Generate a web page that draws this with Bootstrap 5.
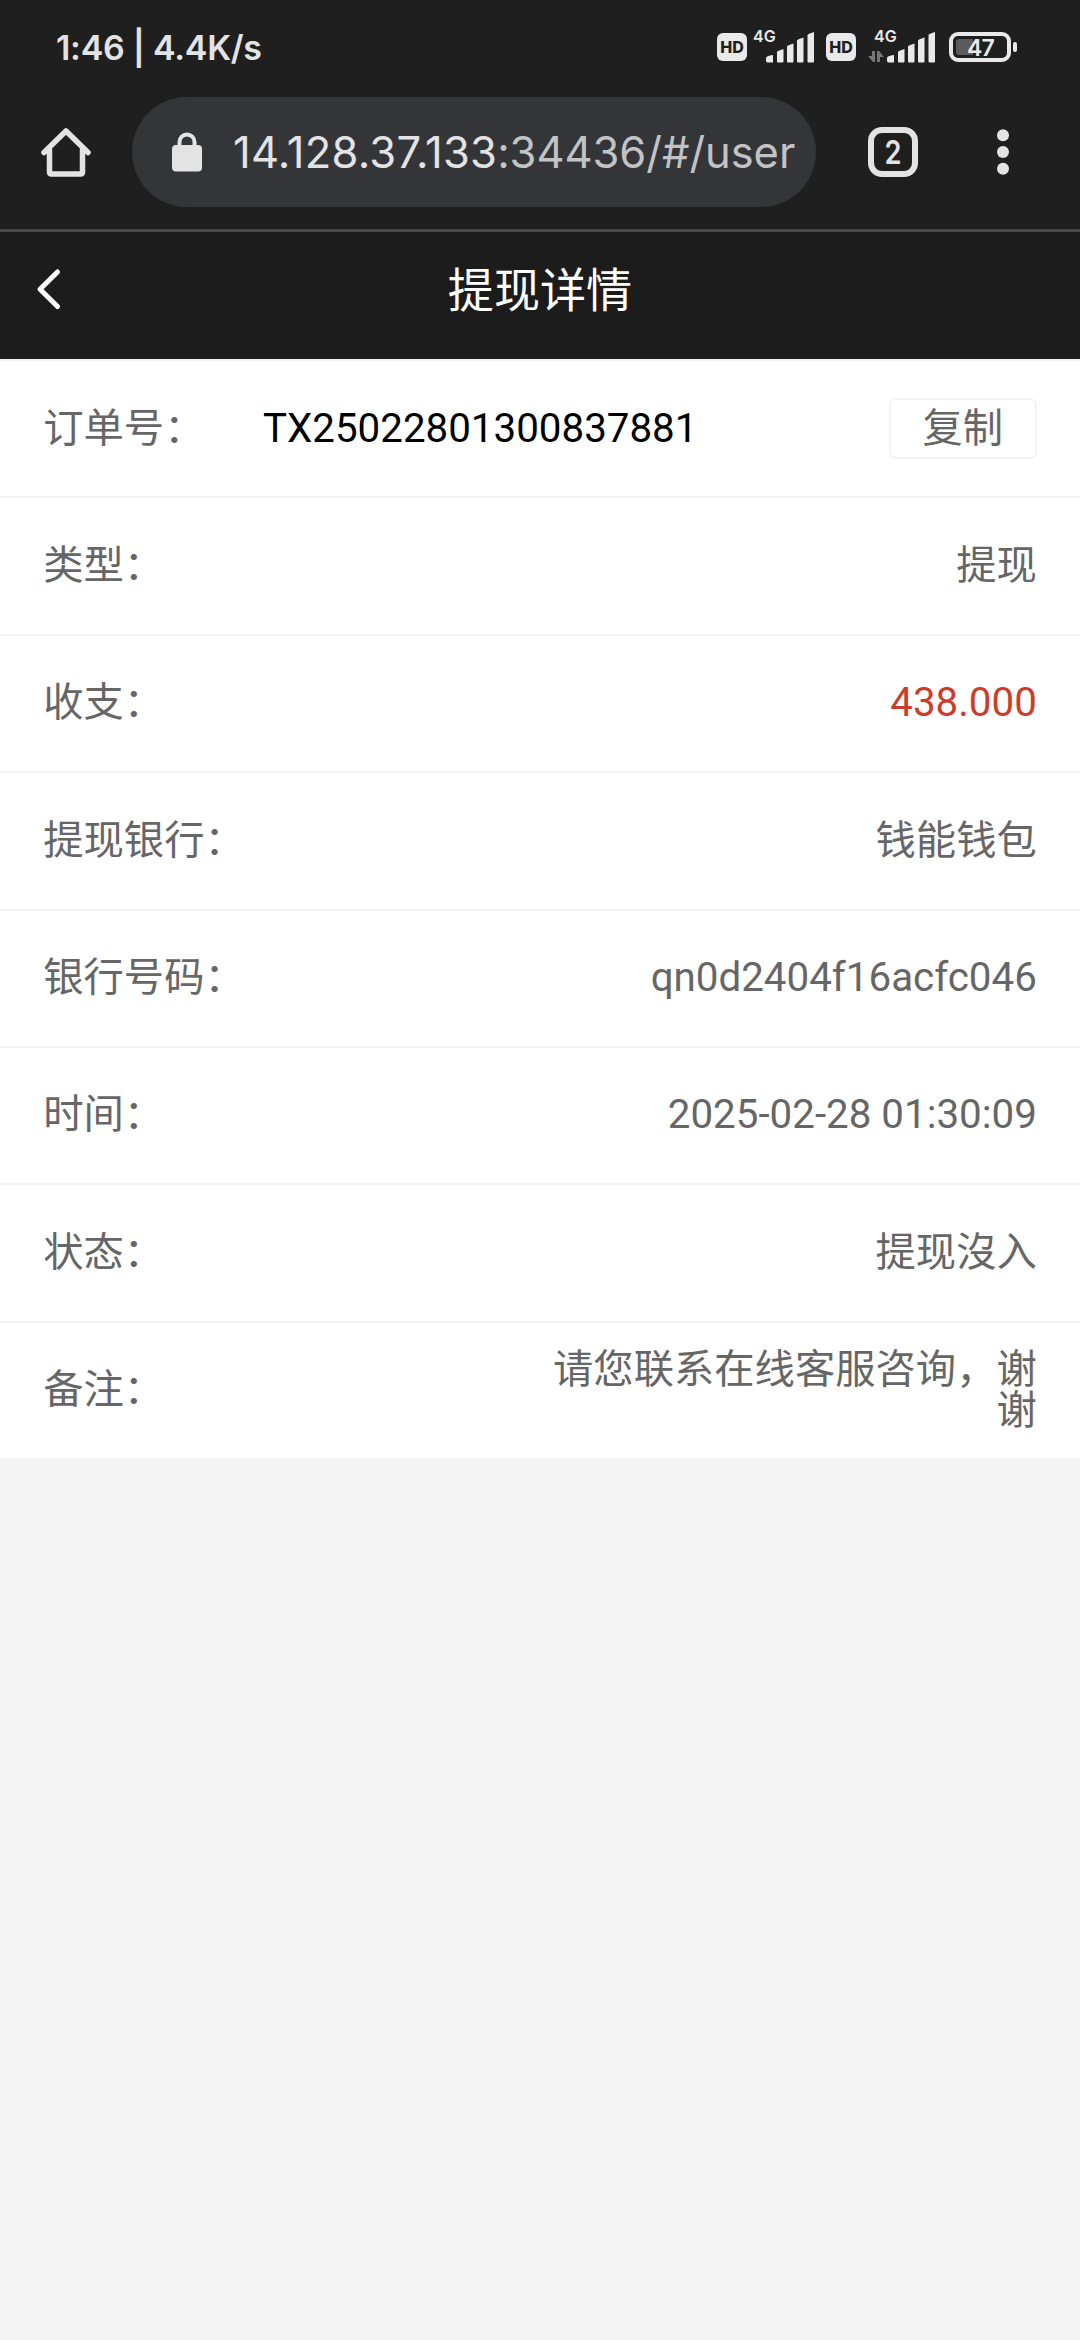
<!DOCTYPE html>
<html lang="zh-CN">
<head>
<meta charset="utf-8">
<meta name="viewport" content="width=device-width, initial-scale=1">
<title>提现详情</title>
<link href="https://cdn.jsdelivr.net/npm/bootstrap@5.3.0/dist/css/bootstrap.min.css" rel="stylesheet">
<style>
body{background:#f3f3f3;font-family:Roboto,"Noto Sans CJK SC",sans-serif;font-size:40.32px;line-height:1;color:#666;overflow:hidden}
.chrome{background:#1f1f1f;color:#e3e3e3;font-family:Inter,sans-serif}
.status{height:97px;padding:0 63px 0 56px}
.clock{font-size:34px;font-weight:600;white-space:pre;letter-spacing:-.28px;line-height:96px}
.toolbar{height:132px;padding-left:40px;padding-bottom:22px}
.omnibox{width:684px;height:110px;border-radius:55px;background:#343539;margin-left:41px;padding-left:40px}
.addr{margin-left:31px;width:563px;overflow:hidden;white-space:nowrap;font-size:43.5px;line-height:60px}
.addr .host{letter-spacing:.25px}
.addr .rest{color:#c2c3c4;letter-spacing:-.05px}
.rule{height:3px;background:#4a4a4a}
.titlebar{height:127px;background:#1c1c1c;color:#fff;font-size:46.08px;padding-bottom:8px}
.back{left:36px;top:36px}
.detail{height:137.4px;border-top:2px solid #f3f3f3;padding:0 43.2px}
.order{color:#000;margin-left:58.5px}
.copybtn{width:148px;height:61px;border:2px solid #f3f3f3;border-radius:7px;color:#666;background:#fff;font-size:40.32px;line-height:1;padding:0}
.amount{color:#cd3c29}
.remark{width:488px;line-height:41.5px}
svg text{font-family:Inter,sans-serif}
</style>
</head>
<body>
<header class="chrome">
  <div class="status d-flex justify-content-between">
    <span class="clock">1:46 | 4.4K/s</span>
    <svg width="304" height="97" viewBox="713 0 304 97" fill="#e9e9e9">
      <g id="hd"><rect x="717" y="33" width="30" height="28" rx="6"/><text x="732" y="53" font-size="16" font-weight="800" text-anchor="middle" fill="#1f1f1f">HD</text></g>
      <text x="753" y="42" font-size="16" font-weight="600">4G</text>
      <g id="bars"><path d="M766 60.500V58q0-2 7-3v7.500h-5.500q-1.500 0-1.500-2zM777 52q0-1 6.500-3v12.500q0 1-1 1h-4.500q-1 0-1-1zM787 46.500q0-1 6.500-3v18q0 1-1 1h-4.500q-1 0-1-1zM797 40.500q0-1 6.500-3v24q0 1-1 1h-4.500q-1 0-1-1zM807.500 35q0-1 6.500-3v29.500q0 1-1 1h-4.500q-1 0-1-1z"/></g>
      <use href="#hd" x="109"/>
      <text x="874" y="42" font-size="16" font-weight="600">4G</text>
      <use href="#bars" x="121"/>
      <path d="M872 51h3v11h-2l-5-6h4zM877 62V51h2l5 6h-4v5z" fill="#777"/>
      <rect x="951" y="34" width="58" height="26" rx="7" fill="none" stroke="#e9e9e9" stroke-width="4"/>
      <path d="M959 39h14v16h-14q-3 0-3-3V42q0-3 3-3z" fill="#5b5b5b"/>
      <text x="980.5" y="56" font-size="23" font-weight="600" text-anchor="middle" letter-spacing="-.8">47</text>
      <rect x="1013" y="42" width="4" height="10" rx="2"/>
    </svg>
  </div>
  <div class="toolbar d-flex align-items-center">
    <svg width="51" height="52" viewBox="0 0 51 52" fill="none" stroke="#e3e3e3" stroke-width="5.500" stroke-linejoin="round" stroke-linecap="round"><path d="M4 26.500 26 5l22 21.500M9.500 24v22q0 2 2 2h29q2 0 2-2V24"/></svg>
    <div class="omnibox d-flex align-items-center">
      <svg width="30" height="40" viewBox="0 0 30 40"><rect y="13" width="30" height="26.500" rx="4" fill="#e3e3e3"/><path d="M7.500 15V10a7.500 7.500 0 0 1 15 0v5" fill="none" stroke="#e3e3e3" stroke-width="4"/></svg>
      <div class="addr"><span class="host">14.128.37.133</span><span class="rest">:34436/#/user</span></div>
    </div>
    <svg class="ms-auto" width="212" height="60" viewBox="0 0 212 60"><rect x="3" y="8" width="44" height="44" rx="11" fill="none" stroke="#e3e3e3" stroke-width="6"/><text x="25" y="42" font-size="33" font-weight="600" text-anchor="middle" textLength="17" lengthAdjust="spacingAndGlyphs" fill="#e3e3e3">2</text><g fill="#e3e3e3"><circle cx="135" cy="13.300" r="6"/><circle cx="135" cy="30" r="6"/><circle cx="135" cy="46.700" r="6"/></g></svg>
  </div>
  <div class="rule"></div>
</header>
<nav class="titlebar position-relative d-flex align-items-center justify-content-center">
  <svg class="back position-absolute" width="28" height="44" viewBox="0 0 28 44" fill="none" stroke="#fff" stroke-width="5" stroke-linecap="round" stroke-linejoin="round"><path d="M21.500 4 4 21.300 21.500 38.500"/></svg>
  <span>提现详情</span>
</nav>
<main class="bg-white">
  <div class="detail d-flex align-items-center"><span>订单号：</span><span class="order">TX25022801300837881</span><button class="copybtn ms-auto" type="button">复制</button></div>
  <div class="detail d-flex align-items-center justify-content-between"><span>类型：</span><span>提现</span></div>
  <div class="detail d-flex align-items-center justify-content-between"><span>收支：</span><span class="amount">438.000</span></div>
  <div class="detail d-flex align-items-center justify-content-between"><span>提现银行：</span><span>钱能钱包</span></div>
  <div class="detail d-flex align-items-center justify-content-between"><span>银行号码：</span><span>qn0d2404f16acfc046</span></div>
  <div class="detail d-flex align-items-center justify-content-between"><span>时间：</span><span>2025-02-28 01:30:09</span></div>
  <div class="detail d-flex align-items-center justify-content-between"><span>状态：</span><span>提现沒入</span></div>
  <div class="detail d-flex align-items-center justify-content-between"><span>备注：</span><span class="remark text-end">请您联系在线客服咨询，谢谢</span></div>
</main>
<script src="https://cdn.jsdelivr.net/npm/bootstrap@5.3.0/dist/js/bootstrap.bundle.min.js"></script>
</body>
</html>
